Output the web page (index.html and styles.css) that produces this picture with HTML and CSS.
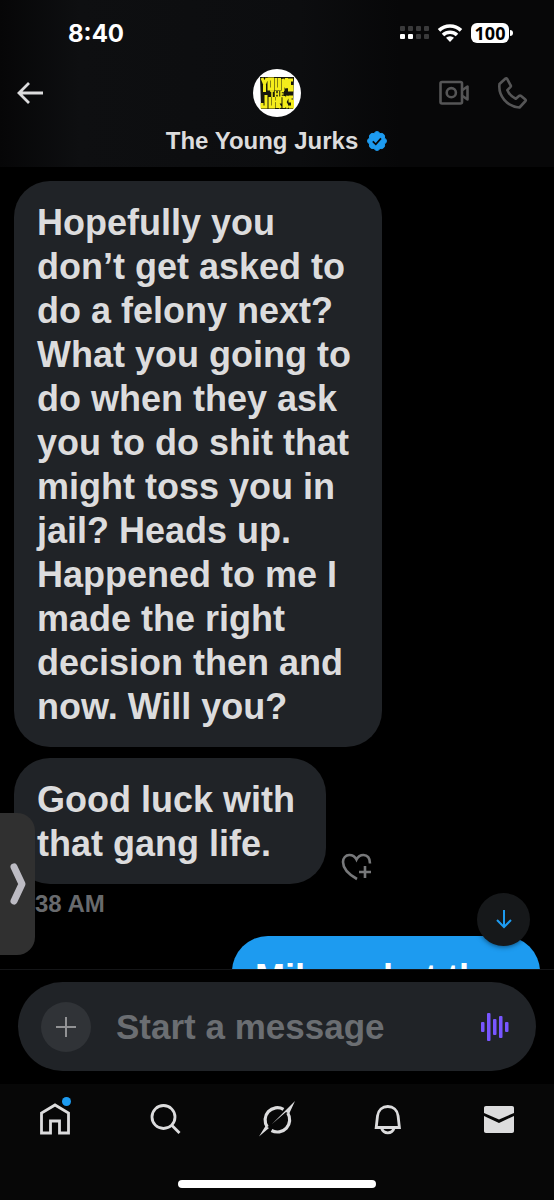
FILE: index.html
```html
<!DOCTYPE html>
<html lang="en">
<head>
<meta charset="utf-8">
<meta name="viewport" content="width=device-width, initial-scale=1">
<title>The Young Jurks</title>
<link rel="stylesheet" href="styles.css">
</head>
<body>
<div class="screen">
  <header class="top">
    <div class="status">
      <span class="clock">8:40</span>
      <div class="status-icons">
        <svg width="29" height="14" viewBox="0 0 29 14" aria-hidden="true">
          <g fill="#3a3a3b"><rect width="5" height="5" rx="1"/><rect x="8" width="5" height="5" rx="1"/><rect x="16" width="5" height="5" rx="1"/><rect x="24" width="5" height="5" rx="1"/><rect x="16" y="8" width="5" height="5" rx="1"/><rect x="24" y="8" width="5" height="5" rx="1"/></g>
          <g fill="#fff"><rect y="8" width="5" height="5" rx="1"/><rect x="8" y="8" width="5" height="5" rx="1"/></g>
        </svg>
        <svg width="24" height="18" viewBox="0 0 24 18" fill="none" stroke="#fff" stroke-width="3.6" aria-hidden="true">
          <path d="M1 6.400a16 16 0 0 1 22 0"/><path d="M5 11a10.200 10.200 0 0 1 14 0"/><path d="M12 18l-4-4.200a5.800 5.800 0 0 1 8 0z" fill="#fff" stroke="none"/>
        </svg>
        <span class="battery">100</span>
      </div>
    </div>
    <div class="bar">
      <button class="icon-btn" aria-label="Back">
        <svg width="26" height="22" viewBox="0 0 26 22" fill="none" stroke="#dcdcdd" stroke-width="2.800"><path d="M26 11H2M12 1L2 11l10 10"/></svg>
      </button>
      <svg class="avatar" width="48" height="48" viewBox="0 0 48 48" role="img" aria-label="The Young Jurks logo">
        <circle cx="24" cy="24" r="24" fill="#fff"/>
        <path d="M7 8h34l-1 32H8z" fill="#17170a"/>
        <g fill="none" stroke="#f4ec1b" stroke-width="3">
          <path d="M9 9l2.500 6L14 9M11.500 14v9M16 10h3.500v10H16zM23 9v11h3.500V9M30 22V10l3.500 9V9M40 11h-3.500v10H39v-5"/>
          <path d="M13 26v12H9v-4M17 28v10h3.500V28M24 39V29h3v4h-3l3.500 6M31 27v12M35 27l-3 6 3 6M40 28h-3v4h2.500v6H36"/>
          <path stroke-width="1.500" d="M17 22h4M19 22v6M22.500 22v6M22.500 25h3M25.500 22v6M31 22.500h-3v5h3M28 25h2.500"/>
        </g>
      </svg>
      <div class="calls">
        <button class="icon-btn" aria-label="Video call">
          <svg width="30" height="26" viewBox="0 0 30 26" fill="none" stroke="#555556" stroke-width="2.600" stroke-linejoin="round"><rect x="1.500" y="2" width="21.500" height="21.500" rx="1.500"/><circle cx="12.300" cy="12.700" r="4.600"/><path d="M23.500 10l5-3.500v13l-5-3.500"/></svg>
        </button>
        <button class="icon-btn" aria-label="Audio call">
          <svg width="30" height="32" viewBox="0 0 30 32" fill="none" stroke="#555556" stroke-width="2.600" stroke-linejoin="round"><path d="M8.500 1.500L2.500 7C1 19 10 29.500 22.500 30.500l6-6.500c.4-.5.3-1-.1-1.400l-4.600-3.800c-.5-.4-1-.4-1.500 0l-3.500 3c-4-1.800-7-5-8.500-8.700l3.300-3.300c.4-.5.4-1 0-1.500L10 1.700c-.4-.5-1-.6-1.500-.2z"/></svg>
        </button>
      </div>
    </div>
    <h1 class="name">The Young Jurks
      <svg width="22" height="22" viewBox="0 0 22 22" role="img" aria-label="Verified"><path fill="#1d9bf0" stroke="#1d9bf0" d="M20.396 11c-.018-.646-.215-1.275-.57-1.816-.354-.54-.852-.972-1.438-1.246.223-.607.27-1.264.14-1.897-.131-.634-.437-1.218-.882-1.687-.47-.445-1.053-.75-1.687-.882-.633-.13-1.290-.083-1.897.14-.273-.587-.704-1.086-1.245-1.440S11.647 1.620 11 1.604c-.646.017-1.273.213-1.813.568s-.969.854-1.240 1.440c-.608-.223-1.267-.272-1.902-.14-.635.130-1.220.436-1.690.882-.445.470-.749 1.055-.878 1.688-.130.633-.080 1.290.144 1.896-.587.274-1.087.705-1.443 1.245-.356.540-.555 1.170-.574 1.817.020.647.218 1.276.574 1.817.356.540.856.972 1.443 1.245-.224.606-.274 1.263-.144 1.896.130.634.433 1.218.877 1.688.470.443 1.054.747 1.687.878.633.132 1.290.084 1.897-.136.274.586.705 1.084 1.246 1.439.540.354 1.170.551 1.816.569.647-.016 1.276-.213 1.817-.567s.972-.854 1.245-1.440c.604.239 1.266.296 1.903.164.636-.132 1.220-.447 1.680-.907.460-.460.776-1.044.908-1.681s.075-1.299-.165-1.903c.586-.274 1.084-.705 1.439-1.246.354-.540.551-1.170.569-1.816z"/><path fill="none" stroke="#0a0a0b" stroke-width="1.800" d="M6.800 11.300l3 3 5.200-6"/></svg>
    </h1>
  </header>

  <main class="thread">
    <p class="bubble">Hopefully you<br>don’t get asked to<br>do a felony next?<br>What you going to<br>do when they ask<br>you to do shit that<br>might toss you in<br>jail? Heads up.<br>Happened to me I<br>made the right<br>decision then and<br>now. Will you?</p>
    <div class="row">
      <p class="bubble">Good luck with<br>that gang life.</p>
      <button class="icon-btn react" aria-label="Add reaction">
        <svg width="32" height="28" viewBox="0 0 32 28" fill="none" stroke="#77787a" stroke-width="2.600"><path d="M16 26C7 21 2 15 2 9c0-4 2.700-7 6.300-7 3.200 0 5.700 1.500 7.200 4.500C17 3.500 19.500 2 22.500 2c3.800 0 6.600 3 6.500 8.500M24 13v12M18 19h12"/></svg>
      </button>
    </div>
    <time class="stamp">38 AM</time>
    <p class="bubble mine">Mike, what the</p>
    <button class="jump" aria-label="Jump to latest">
      <svg width="16" height="19" viewBox="0 0 16 19" fill="none" stroke="#1d9bf0" stroke-width="2"><path d="M8 0v17M1 10l7 7 7-7"/></svg>
    </button>
  </main>

  <form class="composer">
    <div class="field">
      <button class="plus" type="button" aria-label="Add attachment">
        <svg width="20" height="20" viewBox="0 0 20 20" stroke="#919294" stroke-width="2"><path d="M10 0v20M0 10h20"/></svg>
      </button>
      <input class="text" type="text" placeholder="Start a message" aria-label="Start a message">
      <button class="icon-btn" type="button" aria-label="Record voice">
        <svg width="28" height="28" viewBox="0 0 28 28" fill="#7856ff"><rect y="9" width="3.500" height="10" rx="1"/><rect x="6" width="3.500" height="28" rx="1"/><rect x="12" y="6" width="3.500" height="16" rx="1"/><rect x="18" y="3" width="3.500" height="22" rx="1"/><rect x="24" y="9" width="3.500" height="10" rx="1"/></svg>
      </button>
    </div>
  </form>

  <nav class="tabs" aria-label="Main">
    <a class="tab" href="#home" aria-label="Home"><span class="dot"></span>
      <svg width="36" height="36" viewBox="0 0 36 36" fill="none" stroke="#dcdcdd" stroke-width="2.800"><path d="M4.500 32V12L18 4l13.500 8v20H22.500V20h-9v12z"/></svg></a>
    <a class="tab" href="#search" aria-label="Search">
      <svg width="36" height="36" viewBox="0 0 36 36" fill="none" stroke="#dcdcdd" stroke-width="2.800"><circle cx="15.500" cy="16" r="11.500"/><path d="M23.500 24l8 8"/></svg></a>
    <a class="tab" href="#grok" aria-label="Grok">
      <svg width="36" height="36" viewBox="0 0 36 36" fill="none" stroke="#dcdcdd" stroke-width="3.200"><path d="M24.500 8.300A12.300 12.300 0 0 0 8.300 26M12.500 29.500A12.300 12.300 0 0 0 28.700 12"/><path d="M0 35.500L6.500 25l3.500 2zM13 23L36 0l-6 13-3-2z" fill="#dcdcdd" stroke="none"/></svg></a>
    <a class="tab" href="#notifications" aria-label="Notifications">
      <svg width="36" height="36" viewBox="0 0 36 36" fill="none" stroke="#dcdcdd" stroke-width="2.800"><path d="M6.200 26.500L7.500 15c.7-6 5-9.500 10.300-9.500S27.400 9 28.100 15l1.300 11.500zM11.500 27c1 3 3.500 4.800 6.300 4.800s5.300-1.800 6.300-4.800"/></svg></a>
    <a class="tab" href="#messages" aria-label="Messages">
      <svg width="36" height="36" viewBox="0 0 36 36" fill="#dcdcdd"><path d="M3 12V7c0-1.300.7-2 2-2h26c1.300 0 2 .7 2 2v5l-15 6.500zM3 15l15 7 15-7v15c0 1.300-.7 2-2 2H5c-1.300 0-2-.7-2-2z"/></svg></a>
    <span class="home-bar"></span>
  </nav>
  <button class="drawer" aria-label="Open side panel">
    <svg width="16" height="42" viewBox="0 0 16 42" fill="none" stroke="#bcbbc3" stroke-width="7" stroke-linecap="round" stroke-linejoin="round"><path d="M4 4l8 17-8 17"/></svg>
  </button>
</div>
</body>
</html>
```
FILE: styles.css
```css
* { box-sizing: border-box; }

body {
  margin: 0;
  background: #000;
  color: #dcdcdd;
  font-family: "Liberation Sans", Arial, sans-serif;
  font-weight: 700;
}

p, h1 { margin: 0; }

button {
  margin: 0;
  padding: 0;
  border: 0;
  background: none;
  color: inherit;
  font: inherit;
}

svg { display: block; flex: none; overflow: visible; }

.screen {
  position: relative;
  display: flex;
  flex-direction: column;
  height: 100vh;
  overflow: hidden;
}

.top {
  flex: none;
  height: 167px;
  background: linear-gradient(90deg, #060607 0, #0e0f11 80px, #0c0d0f 300px, #070708 400px);
}

.status {
  display: flex;
  justify-content: space-between;
  align-items: center;
  height: 66px;
  padding: 0 45px 0 68px;
}

.clock {
  color: #fff;
  font-family: Inter, sans-serif;
  font-size: 24px;
}

.status-icons { display: flex; align-items: center; gap: 9px; }

.battery {
  position: relative;
  width: 38px;
  height: 20px;
  border-radius: 6px;
  background: #fff;
  color: #000;
  font-family: "Open Sans", sans-serif;
  font-size: 18px;
  line-height: 20px;
  text-align: center;
}

.battery::after {
  content: "";
  position: absolute;
  top: 7px;
  right: -4px;
  width: 3px;
  height: 6px;
  border-radius: 0 3px 3px 0;
  background: #fff;
}

.bar {
  display: grid;
  grid-template-columns: 1fr auto 1fr;
  align-items: center;
  height: 54px;
  padding: 0 27px 0 17px;
}

.avatar { margin-left: 10px; }

.calls {
  display: flex;
  justify-content: flex-end;
  align-items: center;
  gap: 28px;
}

.name {
  display: flex;
  justify-content: center;
  align-items: center;
  gap: 8px;
  height: 42px;
  font-size: 24px;
  line-height: 42px;
}

.thread {
  position: relative;
  flex: 1;
  display: flex;
  flex-direction: column;
  align-items: flex-start;
  min-height: 0;
  padding: 14px 14px 0;
  overflow: hidden;
}

.bubble {
  flex: none;
  padding: 20px 31px 18px 23px;
  border-radius: 36px;
  background: #202327;
  font-size: 36px;
  line-height: 44px;
}

.row {
  flex: none;
  display: flex;
  align-items: flex-end;
  gap: 15px;
  margin-top: 11px;
}

.react { margin-bottom: 3px; }

.stamp {
  flex: none;
  height: 52px;
  padding-left: 21px;
  color: #686a6d;
  font-size: 24px;
  line-height: 40px;
}

.mine {
  align-self: flex-end;
  min-width: 308px;
  background: #1d9bf0;
  color: #fff;
}

.jump {
  position: absolute;
  right: 24px;
  bottom: 23px;
  display: grid;
  place-items: center;
  width: 53px;
  height: 53px;
  border-radius: 50%;
  background: #16181a;
  box-shadow: 0 1px 5px rgba(0, 0, 0, 0.5);
}

.composer {
  flex: none;
  padding: 12px 18px 13px;
  border-top: 1px solid #141517;
}

.field {
  display: flex;
  align-items: center;
  height: 89px;
  padding: 0 27px 0 23px;
  border-radius: 45px;
  background: #202327;
}

.plus {
  flex: none;
  display: grid;
  place-items: center;
  width: 50px;
  height: 50px;
  border-radius: 50%;
  background: #303337;
}

.text {
  flex: 1;
  min-width: 0;
  padding: 0 0 0 25px;
  border: 0;
  outline: 0;
  background: none;
  color: #dcdcdd;
  font: inherit;
  font-size: 35px;
}

.text::placeholder { color: #6b6e72; opacity: 1; }

.tabs {
  position: relative;
  flex: none;
  display: grid;
  grid-template-columns: repeat(5, 1fr);
  height: 116px;
  padding-top: 17px;
  background: #070707;
}

.tab {
  position: relative;
  display: flex;
  justify-content: center;
  align-items: flex-start;
}

.dot {
  position: absolute;
  top: -4px;
  left: calc(50% + 7px);
  width: 9px;
  height: 9px;
  border-radius: 50%;
  background: #1d9bf0;
}

.home-bar {
  position: absolute;
  bottom: 12px;
  left: 50%;
  width: 198px;
  height: 8px;
  margin-left: -99px;
  border-radius: 4px;
  background: #fff;
}

.drawer {
  position: absolute;
  bottom: 245px;
  left: 0;
  display: flex;
  justify-content: flex-end;
  align-items: center;
  width: 35px;
  height: 142px;
  padding-right: 9px;
  border-radius: 0 18px 18px 0;
  background: #303030;
}
```
